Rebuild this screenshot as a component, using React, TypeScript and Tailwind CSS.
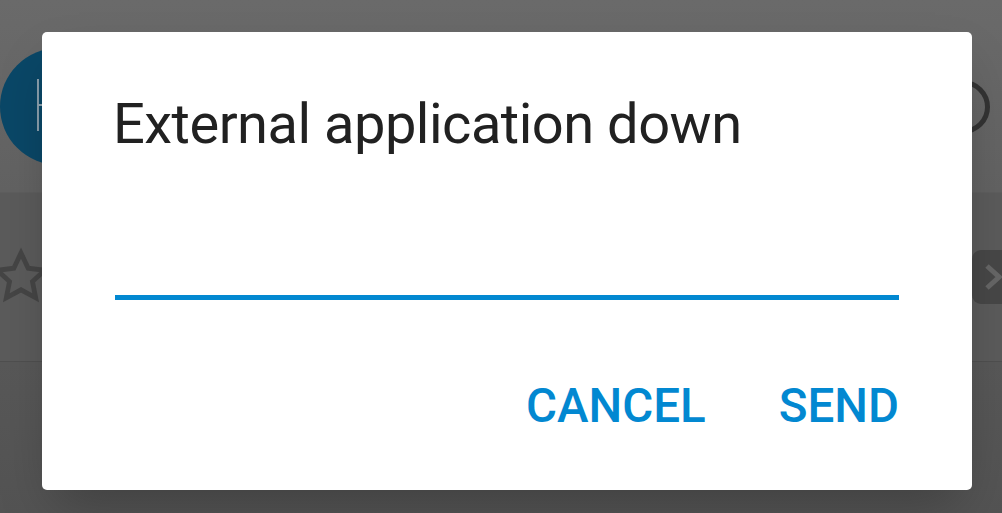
import React from "react";

const StarOutline: React.FC = () => (
  <svg width="64" height="64" viewBox="0 0 24 24" className="-ml-[11px]">
    <path
      d="M12 3l2.7 5.7 6.2.8-4.6 4.2 1.2 6.1L12 16.8l-5.5 3 1.2-6.1-4.6-4.2 6.2-.8z"
      fill="none"
      stroke="#454545"
      strokeWidth="1.8"
    />
  </svg>
);

const App: React.FC = () => {
  return (
    <div
      className="relative w-full h-[513px] overflow-hidden bg-[#575757]"
      style={{ fontFamily: "Roboto, 'Noto Sans', sans-serif" }}
    >
      {/* page behind the dialog (already dimmed) */}
      <div className="flex flex-col h-full">
        <header className="h-[193px] flex items-start justify-between bg-gradient-to-b from-[#6a6a6a] to-[#626262] border-b border-[#5e5e5e]">
          <div className="mt-[48px] w-[117px] h-[117px] rounded-full bg-[#0a4767] flex items-center pl-[30px]">
            <span className="text-[72px] leading-none text-[#8fa3b0] font-thin">H</span>
          </div>
          <div className="mt-[80px] mr-[12px] w-[54px] h-[54px] rounded-full border-[5px] border-[#333333]" />
        </header>
        <div className="h-[169px] flex items-center justify-between bg-[#5b5b5b] border-b border-[#4f4f4f]">
          <StarOutline />
          <div className="w-[40px] h-[54px] -mr-[10px] rounded-[9px] bg-[#474747] flex items-center pl-[12px]">
            <svg width="20" height="30" viewBox="0 0 20 30">
              <path d="M3 4l12 11-12 11" fill="none" stroke="#666666" strokeWidth="5" />
            </svg>
          </div>
        </div>
        <div className="flex-1 bg-gradient-to-b from-[#585858] to-[#535353]" />
      </div>

      {/* dialog */}
      <div className="absolute left-[42px] top-[32px] w-[930px] h-[458px] bg-white rounded-[5px] shadow-2xl flex flex-col pt-[64px] px-[73px]">
        <h2 className="-ml-[2px] text-[56px] leading-none tracking-[-0.5px] text-[#212121] font-normal">
          External application down
        </h2>
        <input
          className="mt-[100px] h-[48px] w-full border-b-[5px] border-[#0288d1] outline-none text-[40px] text-[#212121]"
          defaultValue=""
        />
        <div className="mt-[83px] flex justify-end gap-[73px]">
          <button className="text-[47.5px] leading-none font-medium text-[#0288d1] uppercase">
            Cancel
          </button>
          <button className="text-[47.5px] leading-none font-medium text-[#0288d1] uppercase">
            Send
          </button>
        </div>
      </div>
    </div>
  );
};

export default App;
